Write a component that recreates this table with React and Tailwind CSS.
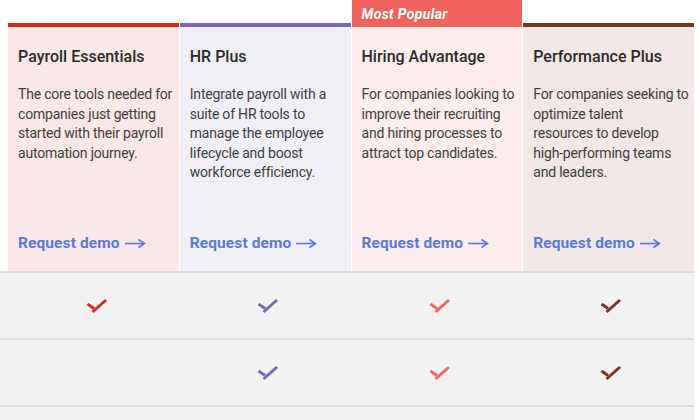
import React from "react";

const plans = [
  {
    title: "Payroll Essentials",
    lines: ["The core tools needed for", "companies just getting", "started with their payroll", "automation journey."],
    bg: "bg-[#fbe7e7]",
    bar: "bg-[#d42b1f]",
  },
  {
    title: "HR Plus",
    lines: ["Integrate payroll with a", "suite of HR tools to", "manage the employee", "lifecycle and boost", "workforce efficiency."],
    bg: "bg-[#f0eff6]",
    bar: "bg-[#7b68b4]",
  },
  {
    title: "Hiring Advantage",
    lines: ["For companies looking to", "improve their recruiting", "and hiring processes to", "attract top candidates."],
    bg: "bg-[#fdeded]",
    bar: null,
  },
  {
    title: "Performance Plus",
    lines: ["For companies seeking to", "optimize talent", "resources to develop", "high-performing teams", "and leaders."],
    bg: "bg-[#f1e7e6]",
    bar: "bg-[#7c3323]",
  },
];

const checkColors = ["#d42b1f", "#7b68b4", "#f3655f", "#7c3323"];

function Check({ color }) {
  return (
    <svg width="22" height="16" viewBox="0 0 22 16" fill="none">
      <path d="M1.5 6 L8 10.5" stroke={color} strokeWidth="3" />
      <path d="M6.5 14 L20 2" stroke={color} strokeWidth="3" />
    </svg>
  );
}

function Arrow() {
  return (
    <svg width="22" height="12" viewBox="0 0 22 12" fill="none" className="ml-[5px]">
      <path d="M0 6.5 H19" stroke="#5a7bd6" strokeWidth="1.6" />
      <path d="M13.5 2.5 L19.5 6.5 L13.5 10.5" stroke="#5a7bd6" strokeWidth="1.6" />
    </svg>
  );
}

export default function App() {
  const rows = [
    [true, true, true, true],
    [false, true, true, true],
  ];
  return (
    <div className="w-[700px] h-[420px] bg-white overflow-hidden" style={{ fontFamily: "Roboto, 'Noto Sans', sans-serif" }}>
      <div className="pl-[8px] pr-[6px] grid grid-cols-4 gap-x-px">
        {plans.map((p, i) => (
          <div key={i} className="flex flex-col">
            {p.bar ? (
              <div className="h-[27px] flex flex-col justify-end">
                <div className={`h-[4px] ${p.bar}`} />
              </div>
            ) : (
              <div className="h-[27px] bg-[#f3635e] flex items-center pl-[10px]">
                <span className="text-white font-bold italic text-[14px] leading-none tracking-[0.35px]">Most Popular</span>
              </div>
            )}
            <div className={`${p.bg} h-[244px] px-[10px] pt-[18px] flex flex-col`}>
              <div className="text-[16px] leading-[24px] text-[#2a2a2a] font-medium">{p.title}</div>
              <div className="mt-[16px] text-[14px] leading-[19.6px] text-[#3e3e3e] tracking-[-0.2px]">
                {p.lines.map((l, j) => (
                  <div key={j} className="whitespace-nowrap">{l}</div>
                ))}
              </div>
              <div className="mt-auto mb-[16px] flex items-center text-[15.5px] font-bold text-[#5a7bd6] tracking-[0.1px]">
                Request demo
                <Arrow />
              </div>
            </div>
          </div>
        ))}
      </div>
      <div className="w-[694px] bg-[#f2f2f2]">
        {rows.map((r, i) => (
          <div key={i} className="h-[67px] border-t-2 border-[#dcdcdc] pl-[8px] grid grid-cols-4">
            {r.map((v, j) => (
              <div key={j} className="flex items-center justify-center pl-[6px]">
                {v ? <Check color={checkColors[j]} /> : null}
              </div>
            ))}
          </div>
        ))}
        <div className="h-[20px] border-t-2 border-[#dcdcdc]" />
      </div>
    </div>
  );
}
